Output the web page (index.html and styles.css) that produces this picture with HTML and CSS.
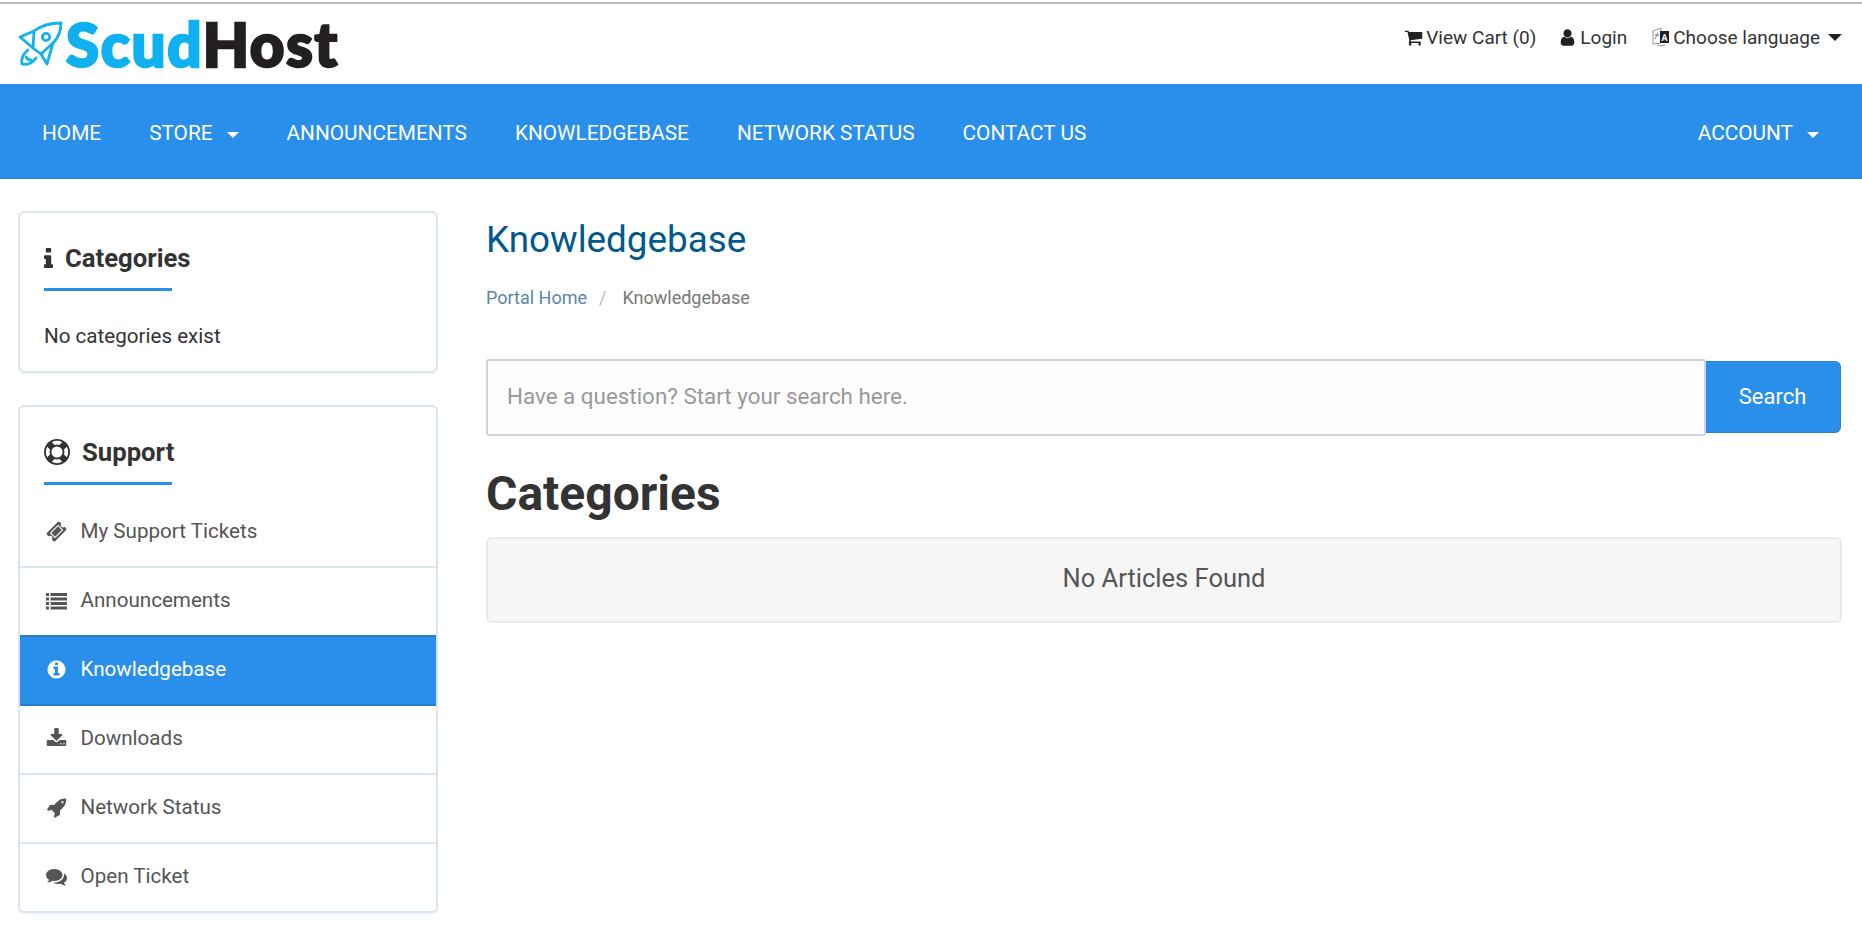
FILE: index.html
```html
<!DOCTYPE html>
<html lang="en">
<head>
<meta charset="utf-8">
<title>ScudHost - Knowledgebase</title>
<link rel="stylesheet" href="styles.css">
</head>
<body>
<svg class="defs" width="0" height="0" aria-hidden="true">
  <symbol id="i-cart" viewBox="0 0 1792 1792"><path d="M704 1536q0 52-38 90t-90 38-90-38-38-90 38-90 90-38 90 38 38 90zm896 0q0 52-38 90t-90 38-90-38-38-90 38-90 90-38 90 38 38 90zm128-1088v512q0 24-16.500 42.500t-40.500 21.500l-1044 122q13 60 13 70 0 16-24 64h920q26 0 45 19t19 45-19 45-45 19h-1024q-26 0-45-19t-19-45q0-11 8-31.500t16-36 21.500-40 15.500-29.500l-177-823h-204q-26 0-45-19t-19-45 19-45 45-19h256q16 0 28.500 6.500t19.500 15.500 13 24.500 8 26 5.500 29.500 4.500 26h1201q26 0 45 19t19 45z"/></symbol>
  <symbol id="i-user" viewBox="0 0 1792 1792"><path d="M1536 1399q0 109-62.500 187t-150.500 78h-854q-88 0-150.500-78t-62.500-187q0-85 8.500-160.500t31.500-152 58.500-131 94-89 134.500-34.500q131 128 313 128t313-128q76 0 134.500 34.500t94 89 58.500 131 31.500 152 8.500 160.500zm-256-887q0 159-112.500 271.500t-271.500 112.500-271.500-112.500-112.500-271.500 112.500-271.500 271.500-112.500 271.500 112.500 112.500 271.500z"/></symbol>
  <symbol id="i-info" viewBox="576 128 640 1408"><path d="M1216 1344v128q0 26-19 45t-45 19h-512q-26 0-45-19t-19-45v-128q0-26 19-45t45-19h64v-384h-64q-26 0-45-19t-19-45v-128q0-26 19-45t45-19h384q26 0 45 19t19 45v576h64q26 0 45 19t19 45zm-128-1152v192q0 26-19 45t-45 19h-256q-26 0-45-19t-19-45v-192q0-26 19-45t45-19h256q26 0 45 19t19 45z"/></symbol>
  <symbol id="i-info-circle" viewBox="0 0 1792 1792"><path d="M1152 1376v-160q0-14-9-23t-23-9h-96v-512q0-14-9-23t-23-9h-320q-14 0-23 9t-9 23v160q0 14 9 23t23 9h96v320h-96q-14 0-23 9t-9 23v160q0 14 9 23t23 9h448q14 0 23-9t9-23zm-128-896v-160q0-14-9-23t-23-9h-192q-14 0-23 9t-9 23v160q0 14 9 23t23 9h192q14 0 23-9t9-23zm640 416q0 209-103 385.500t-279.500 279.500-385.500 103-385.500-103-279.500-279.500-103-385.500 103-385.500 279.500-279.500 385.500-103 385.500 103 279.500 279.500 103 385.500z"/></symbol>
  <symbol id="i-life" viewBox="0 0 1792 1792"><path d="M896 0q182 0 348 71t286 191 191 286 71 348-71 348-191 286-286 191-348 71-348-71-286-191-191-286-71-348 71-348 191-286 286-191 348-71zm0 128q-190 0-361 90l194 194q82-28 167-28t167 28l194-194q-171-90-361-90zm-678 1129l194-194q-28-82-28-167t28-167l-194-194q-90 171-90 361t90 361zm678 407q190 0 361-90l-194-194q-82 28-167 28t-167-28l-194 194q171 90 361 90zm0-384q159 0 271.500-112.500t112.500-271.500-112.500-271.500-271.500-112.500-271.500 112.500-112.500 271.500 112.500 271.500 271.500 112.500zm484-217l194 194q90-171 90-361t-90-361l-194 194q28 82 28 167t-28 167z"/></symbol>
  <symbol id="i-ticket" viewBox="0 0 1792 1792"><path d="M1024 452l316 316-572 572-316-316zm-211 979l618-618q19-19 19-45t-19-45l-362-362q-18-18-45-18t-45 18l-618 618q-19 19-19 45t19 45l362 362q18 18 45 18t45-18zm889-637l-907 908q-37 37-90.500 37t-90.500-37l-126-126q56-56 56-136t-56-136-136-56-136 56l-125-126q-37-37-37-90.500t37-90.500l907-906q37-37 90.500-37t90.500 37l125 125q-56 56-56 136t56 136 136 56 136-56l126 125q37 37 37 90.500t-37 90.500z"/></symbol>
  <symbol id="i-list" viewBox="0 0 1792 1792"><path d="M0 256h256v256H0zM384 256h1408v256H384zM0 640h256v256H0zM384 640h1408v256H384zM0 1024h256v256H0zM384 1024h1408v256H384zM0 1408h256v256H0zM384 1408h1408v256H384z"/></symbol>
  <symbol id="i-download" viewBox="0 0 1792 1792"><path d="M1344 1344q0-26-19-45t-45-19-45 19-19 45 19 45 45 19 45-19 19-45zm256 0q0-26-19-45t-45-19-45 19-19 45 19 45 45 19 45-19 19-45zm128-224v320q0 40-28 68t-68 28h-1472q-40 0-68-28t-28-68v-320q0-40 28-68t68-28h465l135 136q58 56 136 56t136-56l136-136h464q40 0 68 28t28 68zm-325-569q17 41-14 70l-448 448q-18 19-45 19t-45-19l-448-448q-31-29-14-70 17-39 59-39h256v-448q0-26 19-45t45-19h256q26 0 45 19t19 45v448h256q42 0 59 39z"/></symbol>
  <symbol id="i-rocket" viewBox="0 0 1792 1792"><path d="M1504 448q0-40-28-68t-68-28-68 28-28 68 28 68 68 28 68-28 28-68zm224-288q0 249-75.500 430.500t-253.500 360.500q-81 80-195 176l-20 379q-2 16-16 26l-384 224q-7 4-16 4-12 0-23-9l-64-64q-13-14-8-32l85-276-281-281-276 85q-3 1-9 1-14 0-23-9l-64-64q-17-19-5-39l224-384q10-14 26-16l379-20q96-114 176-195 188-187 358-258t431-71q14 0 24 9.500t10 22.500z"/></symbol>
  <symbol id="i-comments" viewBox="0 0 1792 1792"><path d="M1408 768q0 139-94 257t-256.500 186.500-353.500 68.500q-86 0-176-16-124 88-278 128-36 9-86 16h-3q-11 0-20.500-8t-11.500-21q-1-3-1-6.500t.5-6.500 2-6l2.500-5 3.500-5.500 4-5 4.500-5 4-4.500q5-6 23-25t26-29.500 22.500-29 25-38.500 20.500-44q-124-72-195-177t-71-224q0-139 94-257t256.500-186.500 353.500-68.500 353.500 68.500 256.500 186.500 94 257zm384 256q0 120-71 224.500t-195 176.500q10 24 20.500 44t25 38.500 22.500 29 26 29.500 23 25q1 1 4 4.500t4.500 5 4 5 3.500 5.500l2.500 5 2 6 .5 6.500-1 6.500q-3 14-13 22t-22 7q-50-7-86-16-154-40-278-128-90 16-176 16-271 0-472-132 58 4 88 4 161 0 309-45t264-129q125-92 192-212t67-254q0-77-23-152 129 71 204 178t75 230z"/></symbol>
</svg>

<header class="topbar">
  <a class="logo" href="#">
    <svg class="logo-mark" viewBox="0 0 46 46" aria-hidden="true">
      <g fill="none" stroke="#12b2ee" stroke-width="2.800" stroke-linejoin="round" stroke-linecap="round">
        <path d="M16 10 C24 4 34 2 43 2 C43 10 40 17 35 22 L23 33 L15 27 Z"/>
        <path d="M16 10 L2 16 L15 27"/>
        <path d="M35 22 L29 43 L23 33"/>
        <circle cx="28" cy="16" r="3.600"/>
        <path d="M10 29 C5 33 3 38 4 43 C9 44 14 43 18 37"/>
        <path d="M8 36 C9 38 10 39 13 39"/>
      </g>
    </svg>
    <span class="logo-text"><span class="logo-a">Scud</span><span class="logo-b">Host</span></span>
  </a>
  <nav class="toplinks">
    <a href="#"><svg class="ico"><use href="#i-cart"/></svg>View Cart (0)</a>
    <a href="#"><svg class="ico"><use href="#i-user"/></svg>Login</a>
    <a href="#">
      <svg class="ico-lang" viewBox="0 0 18 20" aria-hidden="true">
        <path d="M1 4 L9 1 V16 L1 17 Z" fill="#fff" stroke="#999" stroke-width="1"/>
        <path d="M3 12 L6 6 M3 8 H7" stroke="#777" stroke-width="1" fill="none"/>
        <rect x="8" y="4" width="9" height="12" fill="#222"/>
        <path d="M5 18 Q9 20 13 18" stroke="#999" stroke-width="1" fill="none"/>
        <text x="12.500" y="13.500" class="lang-a">A</text>
      </svg>Choose language<span class="caret caret-dark"></span></a>
  </nav>
</header>

<nav class="mainnav">
  <ul class="navlist">
    <li><a href="#">HOME</a></li>
    <li><a href="#">STORE<span class="caret"></span></a></li>
    <li><a href="#">ANNOUNCEMENTS</a></li>
    <li><a href="#">KNOWLEDGEBASE</a></li>
    <li><a href="#">NETWORK STATUS</a></li>
    <li><a href="#">CONTACT US</a></li>
  </ul>
  <ul class="navlist navlist-right">
    <li><a href="#">ACCOUNT<span class="caret"></span></a></li>
  </ul>
</nav>

<div class="page">
  <aside class="sidebar">
    <section class="card">
      <div class="card-head">
        <h3 class="card-title"><svg class="ico-title ico-title-i"><use href="#i-info"/></svg>Categories</h3>
      </div>
      <p class="card-body">No categories exist</p>
    </section>
    <section class="card">
      <div class="card-head">
        <h3 class="card-title"><svg class="ico-title"><use href="#i-life"/></svg>Support</h3>
      </div>
      <ul class="side-list">
        <li><a href="#"><svg class="ico-side"><use href="#i-ticket"/></svg>My Support Tickets</a></li>
        <li><a href="#"><svg class="ico-side"><use href="#i-list"/></svg>Announcements</a></li>
        <li class="active"><a href="#"><svg class="ico-side"><use href="#i-info-circle"/></svg>Knowledgebase</a></li>
        <li><a href="#"><svg class="ico-side"><use href="#i-download"/></svg>Downloads</a></li>
        <li><a href="#"><svg class="ico-side"><use href="#i-rocket"/></svg>Network Status</a></li>
        <li><a href="#"><svg class="ico-side"><use href="#i-comments"/></svg>Open Ticket</a></li>
      </ul>
    </section>
  </aside>

  <main class="content">
    <h1 class="page-title">Knowledgebase</h1>
    <ol class="breadcrumb">
      <li><a href="#">Portal Home</a></li>
      <li class="sep">/</li>
      <li class="current">Knowledgebase</li>
    </ol>
    <form class="search">
      <input class="search-input" type="text" placeholder="Have a question? Start your search here.">
      <button class="search-btn" type="button">Search</button>
    </form>
    <h2 class="section-title">Categories</h2>
    <div class="well">No Articles Found</div>
  </main>
</div>
</body>
</html>
```
FILE: styles.css
```css
* { box-sizing: border-box; }
html, body { margin: 0; padding: 0; }
body {
  font-family: Roboto, "Liberation Sans", sans-serif;
  color: #333;
  background: #fff;
  height: 929px;
  overflow: hidden;
}
a { color: inherit; text-decoration: none; }
ul, ol { list-style: none; margin: 0; padding: 0; }
.defs { position: absolute; }

.topbar {
  height: 82px;
  border-top: 2px solid #bcbcbc;
  margin-top: 2px;
  padding: 0 20px 0 18px;
  display: flex;
  align-items: center;
  justify-content: space-between;
}
.logo { display: flex; align-items: center; gap: 2px; height: 60px; }
.logo-mark { width: 46px; height: 46px; margin-top: -1px; }
.logo-text {
  font-family: Lato, sans-serif;
  font-weight: 900;
  font-size: 60px;
  line-height: 60px;
  letter-spacing: 1.700px;
  -webkit-text-stroke: 2.500px currentColor;
}
.logo-a { color: #0fb1f0; }
.logo-b { color: #231f20; }

.toplinks { display: flex; align-items: center; gap: 25px; font-size: 19px; color: #333; margin-bottom: 14px; }
.toplinks a { display: flex; align-items: center; }
.toplinks a:first-child { margin-right: -3px; }
.ico { width: 19px; height: 19px; fill: #222; margin-right: 3px; }
.ico-lang { width: 18px; height: 20px; margin-right: 3px; }
.lang-a { font: 700 9px Roboto, sans-serif; fill: #fff; text-anchor: middle; }
.caret {
  display: inline-block;
  width: 0; height: 0;
  margin-left: 14px;
  vertical-align: middle;
  border-left: 6.500px solid transparent;
  border-right: 6.500px solid transparent;
  border-top: 6.500px solid #fff;
}
.caret-dark { border-left-width: 7px; border-right-width: 7px; border-top-width: 7px; border-top-color: #222; margin-left: 8px; }

.mainnav {
  height: 95px;
  background: #2a8fea;
  color: #fff;
  display: flex;
  justify-content: space-between;
  padding: 0 18px;
}
.navlist { display: flex; align-items: center; }
.navlist-right { padding-right: 1px; }
.navlist a { display: block; padding: 3px 24px 0; font-size: 20.800px; line-height: 92px; white-space: nowrap; }

.page {
  display: grid;
  grid-template-columns: 420px 1fr;
  column-gap: 48px;
  padding: 32px 20px 0 18px;
}
.sidebar { display: flex; flex-direction: column; gap: 32px; }
.card {
  border: 2px solid #d8e6f3;
  border-radius: 6px;
  background: #fff;
  box-shadow: 0 1px 2px rgba(0,0,0,.05);
}
.card-head { padding: 0 24px; }
.card-title {
  margin: 0;
  padding-top: 14px;
  width: 128px;
  box-sizing: content-box;
  height: 61px;
  border-bottom: 3px solid #2a8fea;
  display: flex;
  align-items: center;
  white-space: nowrap;
  font-size: 25.700px;
  font-weight: 700;
  color: #333;
}
.ico-title { width: 26px; height: 26px; fill: #333; margin-right: 12px; flex: none; }
.ico-title-i { width: 9px; height: 20px; margin-right: 12px; }
.card-body { margin: 0; padding: 33px 24px 23px; font-size: 20.600px; line-height: 24px; color: #333; }

.side-list { margin-top: 14px; }
.side-list li { border-top: 2px solid #d8e6f3; }
.side-list li:first-child { border-top: 0; }
.side-list a {
  display: flex;
  align-items: center;
  height: 67px;
  padding-left: 26px;
  font-size: 20.600px;
  color: #555;
  padding-bottom: 3px;
}
.ico-side { width: 21px; height: 21px; fill: #555; margin-right: 13.500px; flex: none; }
.side-list .active { background: #2a8fea; border-top-color: #2a7cc7; border-bottom: 2px solid #2a7cc7; }
.side-list .active a { color: #fff; }
.side-list .active .ico-side { fill: #fff; }
.side-list .active + li { border-top: 0; }

.content { min-width: 0; }
.page-title {
  margin: 0;
  padding-top: 7px;
  font-size: 36.800px;
  line-height: 44px;
  font-weight: 400;
  color: #00588c;
}
.breadcrumb { display: flex; margin-top: 24px; font-size: 18px; line-height: 24px; }
.breadcrumb a { color: #5a86a8; }
.sep { color: #bbb; margin: 0 16px 0 12px; }
.current { color: #777; }

.search { display: flex; align-items: center; margin-top: 49px; padding-right: 1px; }
.search-input {
  flex: 1;
  min-width: 0;
  height: 77px;
  margin-right: -2px;
  position: relative;
  z-index: 1;
  border: 2px solid #cfd2e2;
  border-radius: 3px;
  background: #fdfdfd;
  padding: 0 19px 3px;
  font: 400 22.400px Roboto, sans-serif;
  color: #333;
  outline: 0;
}
.search-input::placeholder { color: #999; opacity: 1; }
.search-btn {
  width: 137px;
  height: 72px;
  margin-bottom: 2px;
  padding: 0 0 1px 1px;
  border: 1px solid #2a80d0;
  border-left: 0;
  border-radius: 0 6px 6px 0;
  background: #2a8fea;
  color: #fff;
  font: 400 22px Roboto, sans-serif;
}
.section-title {
  margin: 31px 0 0;
  font-size: 48px;
  line-height: 54px;
  font-weight: 700;
  color: #333;
}
.well {
  margin-top: 16px;
  height: 86px;
  padding-bottom: 4px;
  border: 2px solid #ebebeb;
  border-radius: 6px;
  background: #f6f6f6;
  display: flex;
  align-items: center;
  justify-content: center;
  font-size: 25.500px;
  color: #555;
}
```
